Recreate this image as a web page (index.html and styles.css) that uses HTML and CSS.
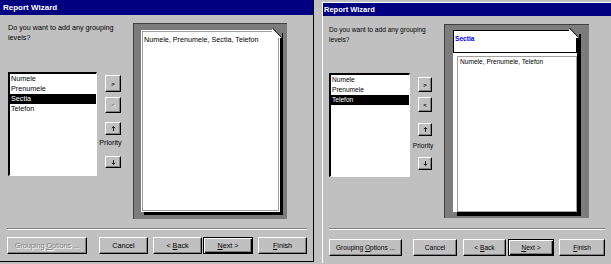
FILE: index.html
```html
<!DOCTYPE html>
<html>
<head>
    <meta charset="UTF-8">
    <title>Report Wizard</title>
    <link rel="stylesheet" href="styles.css">
</head>
<body>
<div class="screen">
    <div class="dialog left">
        <div class="titlebar">Report Wizard</div>
        <div class="top">
            <div class="choose">
                <p class="question">Do you want to add any grouping<br>levels?</p>
                <div class="picker">
                    <ul class="listbox dots">
                        <li>Numele</li>
                        <li>Prenumele</li>
                        <li class="sel">Sectia</li>
                        <li>Telefon</li>
                    </ul>
                    <div class="arrows">
                        <button class="arrow add">&gt;</button>
                        <button class="arrow remove off">&lt;</button>
                        <button class="arrow up"><svg width="5" height="5" viewBox="0 0 5 5"><path d="M2.5 0.5 V5 M0.8 2.2 L2.5 0.5 L4.2 2.2" fill="none" stroke="#202020" stroke-width="1"/></svg></button>
                        <span class="prio">Priority</span>
                        <button class="arrow down"><svg width="5" height="5" viewBox="0 0 5 5"><path d="M2.5 0 V4.5 M0.8 2.8 L2.5 4.5 L4.2 2.8" fill="none" stroke="#202020" stroke-width="1"/></svg></button>
                    </div>
                </div>
            </div>
            <div class="preview">
                <div class="page dots">
                    <div class="detail">Numele, Prenumele, Sectia, Telefon</div>
                    <svg class="fold" width="10" height="10" viewBox="0 0 10 10"><path d="M0 0 H10 V10 Z" fill="#7c7c7c"/><path d="M0 0 L10 10 H2 L0 8 Z" fill="#fff"/><path d="M0.5 0 L9.5 9.5" stroke="#000" stroke-width="1"/></svg>
                </div>
            </div>
        </div>
        <div class="sep"></div>
        <div class="buttons">
            <button class="btn grp off">Grouping <u>O</u>ptions ...</button>
            <button class="btn cancel">Cancel</button>
            <button class="btn back">&lt; <u>B</u>ack</button>
            <button class="btn next default"><u>N</u>ext &gt;</button>
            <button class="btn finish"><u>F</u>inish</button>
        </div>
    </div>

    <div class="dialog right">
        <div class="titlebar">Report Wizard</div>
        <div class="top">
            <div class="choose">
                <p class="question">Do you want to add any grouping<br>levels?</p>
                <div class="picker">
                    <ul class="listbox dots">
                        <li>Numele</li>
                        <li>Prenumele</li>
                        <li class="sel">Telefon</li>
                    </ul>
                    <div class="arrows">
                        <button class="arrow add">&gt;</button>
                        <button class="arrow remove">&lt;</button>
                        <button class="arrow up"><svg width="5" height="5" viewBox="0 0 5 5"><path d="M2.5 0.5 V5 M0.8 2.2 L2.5 0.5 L4.2 2.2" fill="none" stroke="#202020" stroke-width="1"/></svg></button>
                        <span class="prio">Priority</span>
                        <button class="arrow down"><svg width="5" height="5" viewBox="0 0 5 5"><path d="M2.5 0 V4.5 M0.8 2.8 L2.5 4.5 L4.2 2.8" fill="none" stroke="#202020" stroke-width="1"/></svg></button>
                    </div>
                </div>
            </div>
            <div class="preview">
                <div class="page dots">
                    <div class="group">Sectia</div>
                    <div class="detail">Numele, Prenumele, Telefon</div>
                    <svg class="fold" width="10" height="10" viewBox="0 0 10 10"><path d="M0 0 H10 V10 Z" fill="#7c7c7c"/><path d="M0 0 L10 10 H2 L0 8 Z" fill="#fff"/><path d="M0.5 0 L9.5 9.5" stroke="#000" stroke-width="1"/></svg>
                </div>
            </div>
        </div>
        <div class="sep"></div>
        <div class="buttons">
            <button class="btn grp">Grouping <u>O</u>ptions ...</button>
            <button class="btn cancel">Cancel</button>
            <button class="btn back">&lt; <u>B</u>ack</button>
            <button class="btn next default"><u>N</u>ext &gt;</button>
            <button class="btn finish"><u>F</u>inish</button>
        </div>
    </div>
</div>
</body>
</html>
```

FILE: styles.css
```css
body {
    margin: 0;
    background: #c0c0c0;
    font-family: "Liberation Sans", Arial, sans-serif;
}
.screen {
    display: flex;
    align-items: flex-start;
    width: 611px;
    height: 264px;
    overflow: hidden;
    background: #c0c0c0;
}
.dialog {
    display: flex;
    flex-direction: column;
    flex-shrink: 0;
    box-sizing: border-box;
    background: #c0c0c0;
    color: #000;
}
.left {
    width: 314px;
    height: 262px;
    border-right: 1px solid #000;
    border-bottom: 1px solid #000;
    font-size: 7.2px;
}
.right {
    width: 289px;
    height: 261px;
    margin: 2px 0 0 8px;
    border-left: 1px solid #fff;
    border-top: 1px solid #fff;
    font-size: 6.6px;
}
.titlebar {
    background: #000080;
    color: #fff;
    font-weight: bold;
}
.left .titlebar {
    height: 15px;
    line-height: 15px;
    font-size: 8px;
    padding-left: 3px;
}
.right .titlebar {
    height: 13px;
    line-height: 13px;
    font-size: 7.5px;
    padding-left: 1px;
}
.dots {
    background-color: #fff;
    background-image: radial-gradient(circle, #d4d4d4 0.5px, transparent 0.7px);
    background-size: 4px 4px;
}

/* upper part: question, field list and preview */
.top {
    display: flex;
}
.left .top {
    padding: 8px 0 0 8px;
}
.right .top {
    padding: 9px 0 0 6px;
}
.left .choose {
    width: 125px;
}
.right .choose {
    width: 115px;
}
.question {
    margin: 0;
    line-height: 10px;
    white-space: nowrap;
}
.picker {
    display: flex;
}
.left .picker {
    margin-top: 29px;
}
.right .picker {
    margin-top: 28px;
}
.listbox {
    margin: 0;
    padding: 0;
    list-style: none;
    box-sizing: border-box;
    height: 104px;
    border-style: solid;
    border-width: 2px 1px 1px 2px;
    border-color: #000 #fff #fff #000;
}
.left .listbox {
    width: 89px;
}
.right .listbox {
    width: 81px;
}
.listbox li {
    height: 10px;
    line-height: 10px;
    padding-left: 1px;
    white-space: nowrap;
}
.listbox .sel {
    background: #000;
    color: #fff;
}

.arrows {
    display: flex;
    flex-direction: column;
    align-items: center;
    margin-left: 8px;
}
.left .arrows {
    width: 16px;
    padding-top: 3px;
}
.right .arrows {
    width: 14px;
    padding-top: 4px;
}
.arrow {
    display: flex;
    align-items: center;
    justify-content: center;
    box-sizing: border-box;
    width: 100%;
    padding: 0;
    background: #c0c0c0;
    border: 1px solid;
    border-color: #fff #000 #000 #fff;
    box-shadow: inset -1px -1px 0 #808080;
    font: inherit;
    font-size: 6px;
    font-weight: bold;
    line-height: 1;
    color: #000;
}
.arrow.off {
    color: #808080;
    text-shadow: 1px 1px 0 #fff;
}
.prio {
    line-height: 10px;
    white-space: nowrap;
}
.left .add { height: 17px; }
.left .remove { height: 16px; margin-top: 5px; }
.left .up { height: 13px; margin-top: 9px; }
.left .prio { margin-top: 3px; margin-right: 5px; }
.left .down { height: 12px; margin-top: 8px; }
.right .add { height: 15px; }
.right .remove { height: 15px; margin-top: 5px; }
.right .up { height: 13px; margin-top: 11px; }
.right .prio { margin-top: 5px; margin-right: 4px; }
.right .down { height: 13px; margin-top: 6px; }

.preview {
    box-sizing: border-box;
    background: #7c7c7c;
    border-top: 1px solid #404040;
    border-left: 1px solid #404040;
}
.left .preview {
    width: 154px;
    height: 196px;
    padding: 6px 0 0 7px;
}
.right .preview {
    width: 145px;
    height: 194px;
    margin-top: -1px;
    padding: 5px 0 0 8px;
}
.page {
    position: relative;
    box-sizing: border-box;
    height: 182px;
}
.left .page {
    width: 139px;
    padding: 1px;
    box-shadow: 3px 3px 0 #000;
}
.right .page {
    width: 124px;
    box-shadow: 4px 4px 0 #000;
}
.detail {
    box-sizing: border-box;
    border: 1px solid #a0a0a0;
    white-space: nowrap;
    line-height: 10px;
}
.left .detail {
    height: 100%;
    padding: 3px 1px 0;
}
.right .detail {
    height: 156px;
    margin: 3px 0 0 4px;
    padding: 0 2px;
}
.group {
    box-sizing: border-box;
    height: 23px;
    border: 1px solid #000;
    padding: 3px 0 0 1px;
    line-height: 10px;
    color: #0000ff;
    font-weight: bold;
}
.fold {
    position: absolute;
    top: -2px;
    right: -2px;
}

/* bottom part: separator and wizard buttons */
.sep {
    border-top: 1px solid #808080;
    border-bottom: 1px solid #fff;
}
.left .sep {
    margin: 9px 6px 0 7px;
}
.right .sep {
    margin: 10px 6px 0 6px;
}
.buttons {
    display: flex;
}
.left .buttons {
    margin-top: 7px;
    padding-left: 7px;
}
.right .buttons {
    margin-top: 9px;
    padding-left: 6px;
}
.btn {
    box-sizing: border-box;
    height: 17px;
    padding: 0;
    background: #c0c0c0;
    border: 1px solid;
    border-color: #fff #000 #000 #fff;
    box-shadow: inset -1px -1px 0 #808080;
    font: inherit;
    color: #000;
    white-space: nowrap;
}
.btn.default {
    border-color: #000;
    box-shadow: inset 1px 1px 0 #fff, inset -1px -1px 0 #000, inset -2px -2px 0 #808080;
}
.btn.off {
    color: #808080;
    text-shadow: 1px 1px 0 #fff;
}
.left .grp { width: 80px; }
.left .cancel { width: 49px; margin-left: 12px; }
.left .back { width: 49px; margin-left: 5px; }
.left .next { width: 50px; margin-left: 1px; }
.left .finish { width: 49px; margin-left: 5px; }
.right .grp { width: 73px; }
.right .cancel { width: 44px; margin-left: 11px; }
.right .back { width: 43px; margin-left: 6px; }
.right .next { width: 46px; margin-left: 2px; }
.right .finish { width: 46px; margin-left: 5px; }
```
